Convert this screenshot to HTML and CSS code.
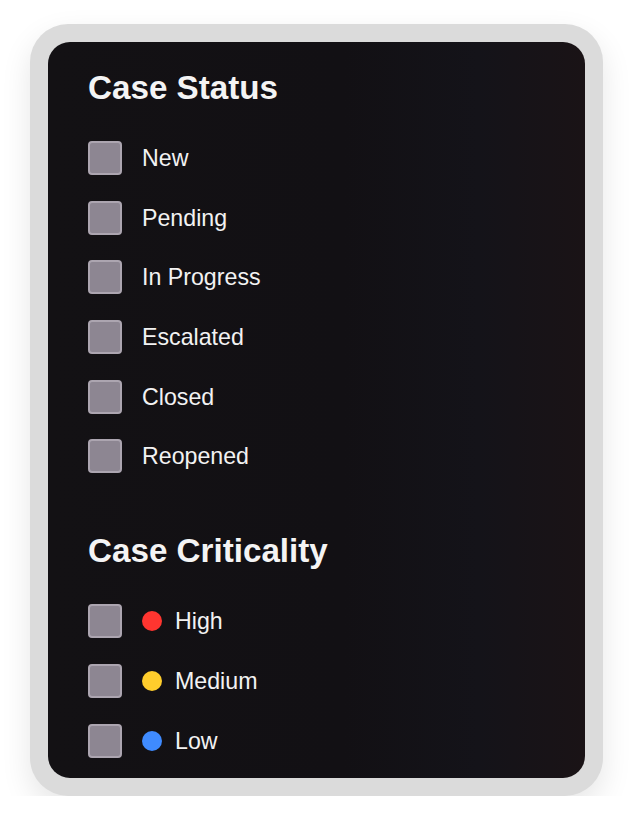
FILE: index.html
```html
<!DOCTYPE html>
<html lang="en">
<head>
<meta charset="utf-8">
<title>Filters</title>
<link rel="stylesheet" href="styles.css">
</head>
<body>
<div class="frame">
  <div class="panel">
    <section class="group">
      <h2 class="title">Case Status</h2>
      <ul class="list">
        <li class="row"><span class="box"></span><span class="label">New</span></li>
        <li class="row"><span class="box"></span><span class="label">Pending</span></li>
        <li class="row"><span class="box"></span><span class="label">In Progress</span></li>
        <li class="row"><span class="box"></span><span class="label">Escalated</span></li>
        <li class="row"><span class="box"></span><span class="label">Closed</span></li>
        <li class="row"><span class="box"></span><span class="label">Reopened</span></li>
      </ul>
    </section>
    <section class="group group-2">
      <h2 class="title">Case Criticality</h2>
      <ul class="list">
        <li class="row"><span class="box"></span><span class="dot dot-high"></span><span class="label">High</span></li>
        <li class="row"><span class="box"></span><span class="dot dot-medium"></span><span class="label">Medium</span></li>
        <li class="row"><span class="box"></span><span class="dot dot-low"></span><span class="label">Low</span></li>
      </ul>
    </section>
  </div>
</div>
</body>
</html>
```
FILE: styles.css
```css
html, body {
  margin: 0;
  padding: 0;
  background: #ffffff;
}
body {
  padding: 24px 30px 0 30px;
  font-family: "Liberation Sans", Arial, sans-serif;
}
.frame {
  width: 573px;
  box-sizing: border-box;
  padding: 18px;
  background: #dbdbdb;
  border-radius: 38px;
  box-shadow: 0 12px 30px rgba(0, 0, 0, 0.10);
}
.panel {
  border-radius: 22px;
  background: linear-gradient(90deg, #131114 0%, #121014 55%, #141319 80%, #1a1316 100%);
  padding: 26px 40px 20px 40px;
  color: #f2f2f2;
}
.group-2 {
  margin-top: 58px;
}
.title {
  margin: 0 0 33px 0;
  font-size: 33.2px;
  line-height: 40px;
  font-weight: bold;
  color: #f4f4f4;
}
.list {
  list-style: none;
  margin: 0;
  padding: 0;
  display: flex;
  flex-direction: column;
  gap: 25.7px;
}
.row {
  display: flex;
  align-items: center;
  height: 34px;
}
.box {
  width: 34px;
  height: 34px;
  box-sizing: border-box;
  border: 2px solid #aca5b0;
  border-radius: 4px;
  background: #8d8692;
  margin-right: 20px;
  flex: none;
}
.dot {
  width: 20px;
  height: 20px;
  border-radius: 50%;
  margin-right: 13px;
  flex: none;
}
.dot-high { background: #ff3530; }
.dot-medium { background: #ffcd2c; }
.dot-low { background: #3f8bff; }
.label {
  font-size: 23.2px;
  line-height: 26px;
  color: #f2f2f2;
}
```
